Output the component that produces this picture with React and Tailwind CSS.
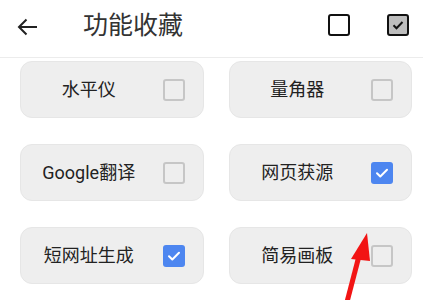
import React from "react";

const items = [
  { label: "水平仪", checked: false },
  { label: "量角器", checked: false },
  { label: "Google翻译", checked: false },
  { label: "网页获源", checked: true },
  { label: "短网址生成", checked: true },
  { label: "简易画板", checked: false },
];

function Box({ checked }) {
  if (checked) {
    return (
      <div className="w-[22px] h-[22px] rounded-[3px] bg-[#4d86f0] flex items-center justify-center shrink-0">
        <svg width="16" height="16" viewBox="0 0 16 16" fill="none">
          <path d="M3 8.2l3.3 3.3L13 4.8" stroke="#fff" strokeWidth="2" strokeLinecap="round" strokeLinejoin="round" />
        </svg>
      </div>
    );
  }
  return <div className="w-[22px] h-[22px] rounded-[3px] border-2 border-[#c6c6c6] shrink-0" />;
}

export default function App() {
  return (
    <div
      className="relative w-[423px] h-[300px] overflow-hidden bg-white"
      style={{ fontFamily: "Roboto, 'Noto Sans CJK SC', sans-serif" }}
    >
      <div className="h-[58px] flex items-center border-b border-[#ececec]">
        <div className="w-[83px] flex items-center pl-[17px] pb-[4px]">
          <svg width="21" height="18" viewBox="0 0 21 18" fill="none">
            <path d="M20 9H2M9.5 1.5L2 9l7.5 7.5" stroke="#222" strokeWidth="2" />
          </svg>
        </div>
        <div className="flex-1 text-[25px] text-[#333] leading-none pb-[6px]">功能收藏</div>
        <div className="flex items-center pb-[8px]">
          <div className="w-[22px] h-[22px] rounded-[3px] border-2 border-[#111] mr-[37px]" />
          <div className="w-[22px] h-[22px] rounded-[3px] border-2 border-[#111] bg-[#bdbdbd] flex items-center justify-center mr-[14px]">
            <svg width="14" height="14" viewBox="0 0 14 14" fill="none">
              <path d="M2.5 7.2l3 3L11.5 4" stroke="#111" strokeWidth="2" />
            </svg>
          </div>
        </div>
      </div>
      <div className="grid grid-cols-2 gap-x-[25px] gap-y-[26px] pl-[20px] pr-[11px] pt-[3px]">
        {items.map((it) => (
          <div
            key={it.label}
            className="h-[57px] rounded-[12px] bg-[#eeeeee] border border-[#e6e6e6] flex items-center pr-[18px]"
          >
            <div className="flex-1 text-center text-[18px] text-[#222] leading-none mr-[6px]">{it.label}</div>
            <Box checked={it.checked} />
          </div>
        ))}
      </div>
      <svg className="absolute left-0 top-0 pointer-events-none" width="423" height="300" viewBox="0 0 423 300">
        <line x1="359" y1="256" x2="347" y2="302" stroke="#f21414" strokeWidth="5" />
        <polygon points="367,233 351,259 370,261" fill="#f21414" />
      </svg>
    </div>
  );
}
